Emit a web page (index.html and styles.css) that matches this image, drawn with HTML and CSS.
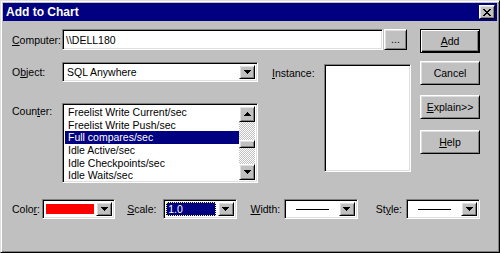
FILE: index.html
```html
<!DOCTYPE html>
<html lang="en">
  <head>
    <meta charset="UTF-8" />
    <title>Add to Chart</title>
    <link rel="stylesheet" href="styles.css">
  </head>
  <body>
    <div class="dialog">
      <div class="titlebar">
        <span class="title">Add to Chart</span>
        <span class="close-btn raised">
          <svg width="8" height="7" viewBox="0 0 8 7" shape-rendering="crispEdges"><path d="M0 0h2v1h-2z M6 0h2v1h-2z M1 1h2v1h-2z M5 1h2v1h-2z M2 2h4v1h-4z M3 3h2v1h-2z M2 4h4v1h-4z M1 5h2v1h-2z M5 5h2v1h-2z M0 6h2v1h-2z M6 6h2v1h-2z" fill="#000"/></svg>
        </span>
      </div>

      <div class="content">
        <div class="main">
          <div class="row computer-row">
            <span class="label"><u>C</u>omputer:</span>
            <div class="sunken edit">\\DELL180</div>
            <button class="raised browse">...</button>
          </div>

          <div class="lower">
            <div class="left-col">
              <div class="row object-row">
                <span class="label">O<u>b</u>ject:</span>
                <div class="sunken combo object-combo">
                  <span class="combo-text">SQL Anywhere</span>
                  <span class="arrow-btn raised"><svg width="7" height="4" viewBox="0 0 7 4" shape-rendering="crispEdges"><path d="M0 0h7v1h-7z M1 1h5v1h-5z M2 2h3v1h-3z M3 3h1v1h-1z" fill="#000"/></svg></span>
                </div>
              </div>

              <div class="row counter-row">
                <span class="label">Coun<u>t</u>er:</span>
                <div class="sunken listbox">
                  <ul class="items">
                    <li>Freelist Write Current/sec</li>
                    <li>Freelist Write Push/sec</li>
                    <li class="selected">Full compares/sec</li>
                    <li>Idle Active/sec</li>
                    <li>Idle Checkpoints/sec</li>
                    <li>Idle Waits/sec</li>
                  </ul>
                  <div class="scrollbar">
                    <span class="scroll-btn raised"><svg width="7" height="4" viewBox="0 0 7 4" shape-rendering="crispEdges"><path d="M3 0h1v1h-1z M2 1h3v1h-3z M1 2h5v1h-5z M0 3h7v1h-7z" fill="#000"/></svg></span>
                    <div class="track">
                      <span class="thumb raised"></span>
                    </div>
                    <span class="scroll-btn raised"><svg width="7" height="4" viewBox="0 0 7 4" shape-rendering="crispEdges"><path d="M0 0h7v1h-7z M1 1h5v1h-5z M2 2h3v1h-3z M3 3h1v1h-1z" fill="#000"/></svg></span>
                  </div>
                </div>
              </div>
            </div>

            <div class="instance">
              <span class="label instance-label"><u>I</u>nstance:</span>
              <div class="sunken instance-list"></div>
            </div>
          </div>
        </div>

        <div class="buttons">
          <button class="raised btn default-btn"><u>A</u>dd</button>
          <button class="raised btn cancel-btn">Cancel</button>
          <button class="raised btn explain-btn"><u>E</u>xplain&gt;&gt;</button>
          <button class="raised btn help-btn"><u>H</u>elp</button>
        </div>

        <div class="bottom">
          <span class="label color-label">Colo<u>r</u>:</span>
          <div class="sunken combo small-combo">
            <span class="combo-text"><span class="swatch"></span></span>
            <span class="arrow-btn raised"><svg width="7" height="4" viewBox="0 0 7 4" shape-rendering="crispEdges"><path d="M0 0h7v1h-7z M1 1h5v1h-5z M2 2h3v1h-3z M3 3h1v1h-1z" fill="#000"/></svg></span>
          </div>

          <span class="label scale-label"><u>S</u>cale:</span>
          <div class="sunken combo small-combo">
            <span class="combo-text"><span class="focus-value">1.0</span></span>
            <span class="arrow-btn raised"><svg width="7" height="4" viewBox="0 0 7 4" shape-rendering="crispEdges"><path d="M0 0h7v1h-7z M1 1h5v1h-5z M2 2h3v1h-3z M3 3h1v1h-1z" fill="#000"/></svg></span>
          </div>

          <span class="label width-label"><u>W</u>idth:</span>
          <div class="sunken combo line-combo">
            <span class="combo-text centered"><span class="line-sample"></span></span>
            <span class="arrow-btn raised"><svg width="7" height="4" viewBox="0 0 7 4" shape-rendering="crispEdges"><path d="M0 0h7v1h-7z M1 1h5v1h-5z M2 2h3v1h-3z M3 3h1v1h-1z" fill="#000"/></svg></span>
          </div>

          <span class="label style-label">St<u>y</u>le:</span>
          <div class="sunken combo line-combo">
            <span class="combo-text centered"><span class="line-sample"></span></span>
            <span class="arrow-btn raised"><svg width="7" height="4" viewBox="0 0 7 4" shape-rendering="crispEdges"><path d="M0 0h7v1h-7z M1 1h5v1h-5z M2 2h3v1h-3z M3 3h1v1h-1z" fill="#000"/></svg></span>
          </div>
        </div>
      </div>
    </div>
  </body>
</html>
```

FILE: styles.css
```css
body {
  margin: 0;
  font-family: "Liberation Sans", Arial, sans-serif;
  font-size: 10.5px;
  color: #000;
}

.dialog {
  width: 500px;
  height: 253px;
  box-sizing: border-box;
  background: #c0c0c0;
  border: 1px solid;
  border-color: #dfdfdf #000 #000 #dfdfdf;
  box-shadow: inset 1px 1px #fff, inset -1px -1px #808080;
  padding: 2px;
}

/* shared 3d borders */
.raised {
  box-sizing: border-box;
  background: #c0c0c0;
  border: 1px solid;
  border-color: #fff #000 #000 #fff;
  box-shadow: inset 1px 1px #dfdfdf, inset -1px -1px #808080;
}

.sunken {
  box-sizing: border-box;
  background: #fff;
  border: 1px solid;
  border-color: #808080 #fff #fff #808080;
  box-shadow: inset 1px 1px #000, inset -1px -1px #dfdfdf;
}

.titlebar {
  height: 18px;
  background: #000080;
  color: #fff;
  display: flex;
  align-items: center;
  justify-content: space-between;
  padding: 0 2px 0 3px;
}

.title {
  font-weight: bold;
  font-size: 12px;
}

.close-btn {
  width: 16px;
  height: 14px;
  display: flex;
  align-items: center;
  justify-content: center;
}

.content {
  display: grid;
  grid-template-columns: 399px 60px;
  column-gap: 9px;
  padding: 8px 0 0 9px;
}

.row {
  display: flex;
  align-items: center;
}

.label {
  flex: none;
}

.computer-row .label,
.object-row .label,
.counter-row .label {
  width: 50px;
}

.edit {
  width: 321px;
  height: 21px;
  padding: 0 3px;
  display: flex;
  align-items: center;
}

button {
  font: inherit;
  color: #000;
  margin: 0;
  padding: 0;
}

.browse {
  width: 23px;
  height: 21px;
  margin-left: 1px;
  padding-bottom: 2px;
}

.lower {
  display: flex;
  margin-top: 12px;
}

.left-col {
  width: 246px;
}

.combo {
  display: flex;
  align-items: stretch;
  height: 20px;
  padding: 2px;
}

.combo-text {
  flex: 1;
  display: flex;
  align-items: center;
  padding-left: 2px;
}

.combo-text.centered {
  justify-content: center;
  padding-left: 0;
}

.arrow-btn {
  width: 16px;
  flex: none;
  display: flex;
  align-items: center;
  justify-content: center;
}

.object-combo {
  width: 196px;
}

.counter-row {
  margin-top: 21px;
  align-items: flex-start;
}

.counter-row .label {
  padding-top: 2px;
}

.listbox {
  width: 196px;
  height: 80px;
  padding: 2px;
  display: flex;
}

.items {
  flex: 1;
  list-style: none;
  margin: 0;
  padding: 0;
  overflow: hidden;
}

.items li {
  height: 12.67px;
  line-height: 12.67px;
  padding-left: 3px;
  white-space: nowrap;
}

.items li.selected {
  background: #000080;
  color: #fff;
}

.scrollbar {
  width: 16px;
  display: flex;
  flex-direction: column;
}

.scroll-btn {
  height: 16px;
  display: flex;
  align-items: center;
  justify-content: center;
}

.track {
  flex: 1;
  background: repeating-conic-gradient(#fff 0 25%, #c0c0c0 0 50%) 0 0 / 2px 2px;
  padding-top: 18px;
}

.thumb {
  display: block;
  height: 8px;
}

.instance {
  display: flex;
  align-items: flex-start;
  margin-left: 14px;
}

.instance-label {
  width: 52px;
  padding-top: 5px;
}

.instance-list {
  width: 87px;
  height: 108px;
  margin-top: 2px;
}

.buttons {
  display: flex;
  flex-direction: column;
}

.btn {
  width: 60px;
  height: 24px;
}

.default-btn {
  border-color: #000;
  box-shadow: inset 1px 1px #fff, inset -1px -1px #000, inset -2px -2px #808080;
}

.cancel-btn {
  margin-top: 8px;
}

.explain-btn {
  margin-top: 10px;
}

.help-btn {
  margin-top: 11px;
}

.bottom {
  grid-column: 1 / 3;
  margin-top: 16px;
  display: flex;
  align-items: center;
}

.color-label {
  width: 30px;
}

.scale-label {
  width: 36px;
  margin-left: 12px;
}

.width-label {
  width: 33px;
  margin-left: 14px;
}

.style-label {
  width: 30px;
  margin-left: 18px;
}

.small-combo {
  width: 74px;
}

.line-combo {
  width: 75px;
}

.swatch {
  display: block;
  width: 48px;
  height: 10px;
  margin-left: 1px;
  background: #f00;
}

.small-combo .combo-text {
  padding-left: 0;
}

.focus-value {
  flex: 1;
  align-self: stretch;
  display: flex;
  align-items: center;
  padding-left: 2px;
  background: #000080;
  color: #fff;
  outline: 1px dotted #ffff80;
  outline-offset: -1px;
  margin-right: 2px;
}

.line-sample {
  width: 33px;
  height: 1px;
  background: #000;
}
```
